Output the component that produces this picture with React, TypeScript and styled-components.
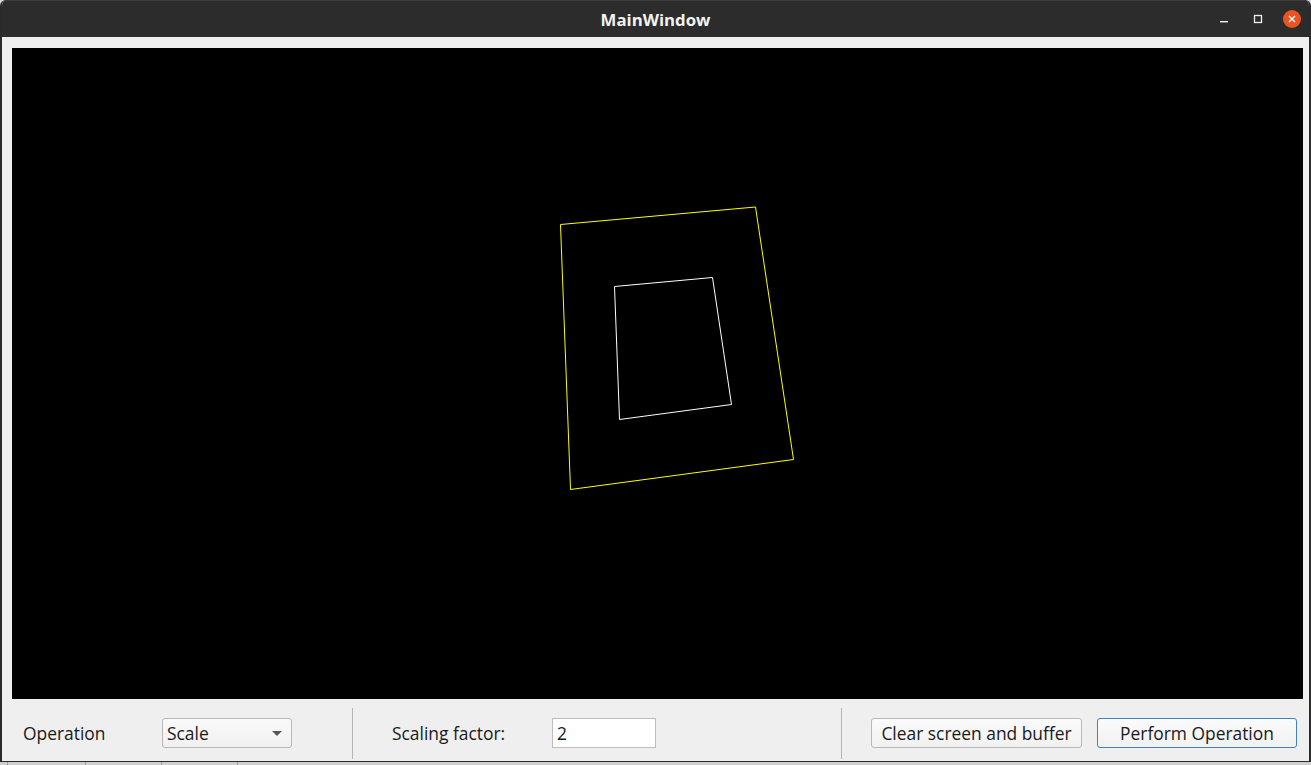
import React from "react";
import styled, { createGlobalStyle } from "styled-components";

const Global = createGlobalStyle`
  html, body { margin: 0; padding: 0; background: #d6d6d6; }
  body { font-family: "Open Sans", "Liberation Sans", sans-serif; overflow: hidden; }
`;

const Screen = styled.div`
  width: 1311px;
  height: 765px;
  display: flex;
  flex-direction: column;
`;

const Window = styled.div`
  height: 762px;
  box-sizing: border-box;
  display: flex;
  flex-direction: column;
  border: solid #2b2b2b;
  border-width: 0 2px 1px 2px;
  border-radius: 6px 6px 0 0;
  overflow: hidden;
  background: #efefef;
`;

const TitleBar = styled.div`
  height: 37px;
  flex: none;
  background: #2c2c2c;
  border-top: 1px solid #3c3c3c;
  box-sizing: border-box;
  display: flex;
  align-items: center;
  justify-content: center;
  position: relative;
`;

const Title = styled.div`
  color: #f2f2f2;
  font-family: "Open Sans", "DejaVu Sans", sans-serif;
  font-weight: 700;
  font-size: 16.8px;
`;

const Controls = styled.div`
  position: absolute;
  right: 0;
  top: 0;
  height: 36px;
  display: flex;
  align-items: center;
`;

const CtlBtn = styled.div<{ $w: number }>`
  width: ${(p) => p.$w}px;
  height: 36px;
  display: flex;
  align-items: center;
  justify-content: center;
`;

const CloseDot = styled.div`
  width: 18px;
  height: 18px;
  border-radius: 50%;
  background: #e95420;
  display: flex;
  align-items: center;
  justify-content: center;
`;

const Body = styled.div`
  flex: 1;
  display: flex;
  flex-direction: column;
  padding: 11px 6px 0 10px;
`;

const Canvas = styled.div`
  height: 651px;
  background: #000;
  flex: none;
`;

const Toolbar = styled.div`
  flex: 1;
  display: flex;
  align-items: center;
  padding-top: 6px;
  font-size: 17.4px;
  color: #1a1a1a;
  margin-left: -10px;
`;

const Label = styled.div<{ $w: number; $ml: number }>`
  width: ${(p) => p.$w}px;
  margin-left: ${(p) => p.$ml}px;
  flex: none;
  white-space: nowrap;
`;

const Combo = styled.div`
  width: 130px;
  height: 30px;
  box-sizing: border-box;
  border: 1px solid #b9b9b9;
  border-radius: 3px;
  background: linear-gradient(#fafafa, #f0f0f0);
  display: flex;
  align-items: center;
  justify-content: space-between;
  padding: 0 9px 0 4px;
  flex: none;
`;

const Arrow = styled.div`
  width: 0;
  height: 0;
  border-left: 5px solid transparent;
  border-right: 5px solid transparent;
  border-top: 5px solid #555;
`;

const Sep = styled.div<{ $ml: number }>`
  width: 1px;
  height: 51px;
  background: #b4b4b4;
  margin-left: ${(p) => p.$ml}px;
  flex: none;
`;

const Input = styled.div`
  width: 104px;
  height: 30px;
  box-sizing: border-box;
  border: 1px solid #bdbdbd;
  background: #fff;
  display: flex;
  align-items: center;
  padding-left: 4px;
  flex: none;
`;

const Button = styled.div<{ $w: number; $ml: number; $focus?: boolean }>`
  width: ${(p) => p.$w}px;
  margin-left: ${(p) => p.$ml}px;
  height: 30px;
  box-sizing: border-box;
  border: 1px solid ${(p) => (p.$focus ? "#3f83c6" : "#b9b9b9")};
  border-radius: 3px;
  background: linear-gradient(#fbfbfb, #f1f1f1);
  display: flex;
  align-items: center;
  justify-content: center;
  flex: none;
  white-space: nowrap;
`;

const Strip = styled.div`
  height: 3px;
  background: #cfcfcf;
  display: flex;
`;

const StripCell = styled.div<{ $w: number }>`
  width: ${(p) => p.$w}px;
  border-right: 1px solid #9a9a9a;
  box-sizing: border-box;
`;

export default function App() {
  return (
    <>
      <Global />
      <Screen>
        <Window>
          <TitleBar>
            <Title>MainWindow</Title>
            <Controls>
              <CtlBtn $w={34}>
                <svg width="10" height="10" viewBox="0 0 10 10">
                  <rect x="1" y="7" width="8" height="1.4" fill="#f0f0f0" />
                </svg>
              </CtlBtn>
              <CtlBtn $w={34}>
                <svg width="10" height="10" viewBox="0 0 10 10">
                  <rect x="1.5" y="1.5" width="7" height="7" fill="none" stroke="#f0f0f0" strokeWidth="1.3" />
                </svg>
              </CtlBtn>
              <CtlBtn $w={34}>
                <CloseDot>
                  <svg width="10" height="10" viewBox="0 0 10 10">
                    <path d="M2 2 L8 8 M8 2 L2 8" stroke="#fff" strokeWidth="1.4" />
                  </svg>
                </CloseDot>
              </CtlBtn>
            </Controls>
          </TitleBar>
          <Body>
            <Canvas>
              <svg width="1291" height="651" viewBox="12 48 1291 651">
                <polygon
                  points="560.5,224.5 755.5,207 793.5,459.5 570.5,489.5"
                  fill="none"
                  stroke="#ffff00"
                  strokeWidth="1"
                />
                <polygon
                  points="614.5,286.5 712.5,277.5 731.5,404.5 619.5,419.5"
                  fill="none"
                  stroke="#ffffff"
                  strokeWidth="1"
                />
              </svg>
            </Canvas>
            <Toolbar>
              <Label $w={139} $ml={21}>Operation</Label>
              <Combo>
                <span>Scale</span>
                <Arrow />
              </Combo>
              <Sep $ml={60} />
              <Label $w={160} $ml={39}>Scaling factor:</Label>
              <Input>2</Input>
              <Sep $ml={185} />
              <Button $w={211} $ml={29}>Clear screen and buffer</Button>
              <Button $w={200} $ml={15} $focus>Perform Operation</Button>
            </Toolbar>
          </Body>
        </Window>
        <Strip>
          <StripCell $w={8} />
          <StripCell $w={78} />
          <StripCell $w={76} />
          <StripCell $w={76} />
        </Strip>
      </Screen>
    </>
  );
}
